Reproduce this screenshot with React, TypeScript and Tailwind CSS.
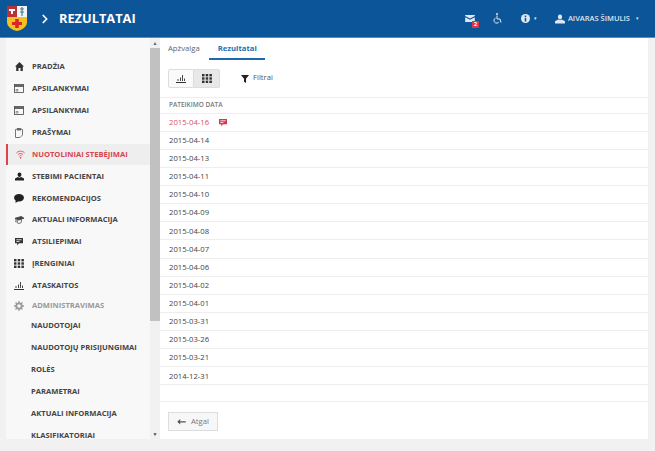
import React from 'react';
import { ChevronRight } from 'lucide-react';

function Crest() {
  return (
    <svg width="20" height="25" viewBox="0 0 20 25" className="shrink-0">
      <path d="M0 0H10V11H0Z" fill="#b5343c" />
      <path d="M10 0H20V11H10Z" fill="#f4f4f4" />
      <path d="M0 11H20V16C20 21 15 24 10 25C5 24 0 21 0 16Z" fill="#f3c21f" />
      <path d="M8.2 13H11.8V16H15V19H11.8V22H8.2V19H5V16H8.2Z" fill="#d9262c" />
      <path d="M2 3H8V5H6V8H4V5H2Z" fill="#fff" />
      <path d="M15 1V10M13 3H17M13 6H17" stroke="#3d7f9d" strokeWidth="1.2" />
    </svg>
  );
}

function Bars({ c = '#333' }: { c?: string }) {
  return (
    <svg width="10" height="9" viewBox="0 0 10 9">
      <path d="M0 8.500H10" stroke={c} strokeWidth="1" />
      <path d="M2 7V5M4.500 7V3.500M6.500 7V1M8.500 7V4.500" stroke={c} strokeWidth="0.9" />
    </svg>
  );
}

function Dots({ c = '#333' }: { c?: string }) {
  return (
    <svg width="10" height="9" viewBox="0 0 10 9" fill={c}>
      {[0, 3.300, 6.600].map((y) => [0, 3.700, 7.400].map((x) => <rect key={`${x}-${y}`} x={x} y={y} width="2.500" height="2.400" />))}
    </svg>
  );
}

function FeedbackIcon({ c = '#333' }: { c?: string }) {
  return (
    <svg width="8" height="8" viewBox="0 0 9 9">
      <path d="M0 0H9V6H4.500L2.500 8.500V6H0Z" fill={c} />
      <path d="M1.500 2H7.500M1.500 4H5" stroke="#fff" strokeWidth="0.9" />
    </svg>
  );
}

const Home = () => (
  <svg width="9" height="9" viewBox="0 0 9 9" fill="#333"><path d="M4.500 0L9 4.500H7.800V9H5.500V6H3.500V9H1.200V4.500H0Z" /></svg>
);
const Cal = () => (
  <svg width="10" height="9" viewBox="0 0 10 9" fill="none" stroke="#444"><rect x="0.500" y="0.500" width="9" height="8" strokeWidth="0.8" /><path d="M0.500 2H9.500" strokeWidth="1.600" /><path d="M2 5.500H4V7H2Z" strokeWidth="0.500" /></svg>
);
const Clip = () => (
  <svg width="8" height="10" viewBox="0 0 8 10" fill="none" stroke="#666" strokeWidth="0.900"><path d="M1.500 1.500H0.500V9.500H5L7.500 7V1.500H6.500" /><path d="M2 0.500H6V2H2Z" fill="#666" /></svg>
);
const Signal = () => (
  <svg width="9" height="9" viewBox="0 0 10 10" fill="none" stroke="#d9444d" strokeWidth="1"><path d="M0.500 3.200C3 0.700 7 0.700 9.500 3.200M2.200 5C3.800 3.600 6.200 3.600 7.800 5M3.800 6.800C4.500 6.200 5.500 6.200 6.200 6.800" /><circle cx="5" cy="8.700" r="0.900" fill="#d9444d" stroke="none" /></svg>
);
const Person = ({ c = '#222', s = 9 }: { c?: string; s?: number }) => (
  <svg width={s} height={s} viewBox="0 0 11 10" fill={c}><path d="M5.500 0C7 0 7.800 1 7.800 2.500C7.800 4 7 5.500 5.500 5.500C4 5.500 3.200 4 3.200 2.500C3.200 1 4 0 5.500 0Z" /><path d="M3.500 5.500L5.500 6.500L7.500 5.500L11 7.500V10H0V7.500Z" /></svg>
);
const Bubble = () => (
  <svg width="10" height="9" viewBox="0 0 11 10" fill="#222"><ellipse cx="5.500" cy="4.200" rx="5.500" ry="4.200" /><path d="M2 6.500L1.500 10L5 7.800Z" /></svg>
);
const Grad = () => (
  <svg width="9" height="9" viewBox="0 0 10 10" fill="none" stroke="#444" strokeWidth="0.900"><path d="M0 2.500L7 0.500L10 2.500L4 4.500Z" fill="#444" /><path d="M2.500 4.500V7.500C4 9 6 8 7 7V3.500M1 3V7" /></svg>
);
const Gear = () => (
  <svg width="10" height="10" viewBox="0 0 10 10" fill="none" stroke="#999"><circle cx="5" cy="5" r="2.700" strokeWidth="1.800" /><path d="M5 0V2M5 8V10M0 5H2M8 5H10M1.500 1.500L2.800 2.800M7.200 7.200L8.500 8.500M1.500 8.500L2.800 7.200M7.200 2.800L8.500 1.500" strokeWidth="1.300" /></svg>
);
const MailIc = () => (
  <svg width="10" height="7" viewBox="0 0 11 8"><path d="M0 0H11V1.200L5.500 4L0 1.200Z" fill="#dfe9f2" /><path d="M0 2.500L5.500 5.300L11 2.500V8H0Z" fill="#dfe9f2" /></svg>
);
const Wheel = () => (
  <svg width="9" height="11" viewBox="0 0 9 11" fill="none" stroke="#dfe9f2" strokeWidth="1"><circle cx="4" cy="1" r="1" fill="#dfe9f2" stroke="none" /><path d="M4 2.500V6H7L8 9.500" /><path d="M2.500 5A2.700 2.700 0 1 0 6 8.800" /></svg>
);
const InfoIc = () => (
  <svg width="9" height="9" viewBox="0 0 9 9"><circle cx="4.500" cy="4.500" r="4.500" fill="#dfe9f2" /><path d="M3.700 1.500H5.300V3H3.700ZM3.700 3.800H5.300V7.500H3.700Z" fill="#0d5599" /></svg>
);
const Funnel = () => (
  <svg width="8" height="8" viewBox="0 0 8 8" fill="#222"><path d="M0 0H8L5 3.800V8L3 6.800V3.800Z" /></svg>
);
const Back = () => (
  <svg width="9" height="6" viewBox="0 0 10 7" fill="#555"><path d="M0 3.200L3.500 0V2.500H10V4H3.500V6.500Z" /></svg>
);

type Item = { label: string; icon?: React.ReactNode; active?: boolean; muted?: boolean; sub?: boolean };

const items: Item[] = [
  { label: 'PRADŽIA', icon: <Home /> },
  { label: 'APSILANKYMAI', icon: <Cal /> },
  { label: 'APSILANKYMAI', icon: <Cal /> },
  { label: 'PRAŠYMAI', icon: <Clip /> },
  { label: 'NUOTOLINIAI STEBĖJIMAI', icon: <Signal />, active: true },
  { label: 'STEBIMI PACIENTAI', icon: <Person /> },
  { label: 'REKOMENDACIJOS', icon: <Bubble /> },
  { label: 'AKTUALI INFORMACIJA', icon: <Grad /> },
  { label: 'ATSILIEPIMAI', icon: <FeedbackIcon /> },
  { label: 'ĮRENGINIAI', icon: <Dots /> },
  { label: 'ATASKAITOS', icon: <Bars /> },
  { label: 'ADMINISTRAVIMAS', icon: <Gear />, muted: true },
  { label: 'NAUDOTOJAI', sub: true },
  { label: 'NAUDOTOJŲ PRISIJUNGIMAI', sub: true },
  { label: 'ROLĖS', sub: true },
  { label: 'PARAMETRAI', sub: true },
  { label: 'AKTUALI INFORMACIJA', sub: true },
  { label: 'KLASIFIKATORIAI', sub: true },
];

const dates = ['2015-04-16', '2015-04-14', '2015-04-13', '2015-04-11', '2015-04-10', '2015-04-09', '2015-04-08', '2015-04-07', '2015-04-06', '2015-04-02', '2015-04-01', '2015-03-31', '2015-03-26', '2015-03-21', '2014-12-31'];

export default function App() {
  return (
    <div className="w-[655px] h-[451px] overflow-hidden bg-[#f1f1f1] flex flex-col font-['Open_Sans',sans-serif] text-[#333]">
      <header className="h-[38px] shrink-0 bg-[#0d5599] border-b border-[#5b8db8] flex items-center text-white">
        <div className="pl-[7px] flex items-center"><Crest /></div>
        <ChevronRight size={14} strokeWidth={3} className="ml-[11px]" />
        <div className="ml-[7px] text-[12.800px] font-bold">REZULTATAI</div>
        <div className="ml-auto flex items-center text-[#dfe9f2]">
          <div className="relative mr-[18px]">
            <MailIc />
            <span className="absolute left-[7px] top-[6px] w-[7px] h-[7px] bg-[#d9364a] text-white text-[6px] font-bold leading-[7px] text-center">2</span>
          </div>
          <span className="mr-[19px] flex"><Wheel /></span>
          <span className="mr-[4px] flex"><InfoIc /></span>
          <span className="text-[5px] mr-[18px]">▾</span>
          <span className="mr-[3px] flex"><Person c="#dfe9f2" s={10} /></span>
          <span className="text-[7.500px] font-semibold">AIVARAS ŠIMULIS</span>
          <span className="text-[5px] ml-[6px] mr-[16px]">▾</span>
        </div>
      </header>
      <div className="flex h-[401px] pl-[6px] pr-[7px]">
        <aside className="w-[144px] bg-[#f8f8f8] overflow-hidden pt-[18px]">
          {items.map((it, i) => (
            <div key={i} className={`flex items-center text-[7.600px] font-bold whitespace-nowrap ${it.active ? 'bg-[#eeeeee] text-[#d9444d] border-l-[2px] border-[#d9444d]' : 'text-[#444]'} ${it.muted ? 'text-[#999] h-[18px]' : 'h-[21.900px]'}`}>
              {it.sub ? (
                <span className="pl-[25px]">{it.label}</span>
              ) : (
                <>
                  <span className={`flex justify-center ${it.active ? 'w-[24px]' : 'w-[26px]'}`}>{it.icon}</span>
                  <span>{it.label}</span>
                </>
              )}
            </div>
          ))}
        </aside>
        <div className="w-[10px] bg-[#f1f1f1] flex flex-col items-center">
          <div className="h-[10px] text-[5px] leading-[10px] text-[#666]">▲</div>
          <div className="h-[273px] w-full bg-[#c1c1c1]"></div>
          <div className="mt-auto h-[10px] text-[5px] leading-[10px] text-[#444]">▼</div>
        </div>
        <main className="flex-1 bg-white flex flex-col">
          <div className="h-[22px] flex items-center pl-[8px] text-[7.700px] relative">
            <span className="text-[#666]">Apžvalga</span>
            <span className="ml-[18px] font-bold text-[#2a6fb0]">Rezultatai</span>
            <span className="absolute left-[49px] bottom-0 w-[56px] h-[2px] bg-[#1f6aae]"></span>
          </div>
          <div className="h-[37px] pl-[8px] pt-[9px] flex items-start">
            <button className="w-[26px] h-[19px] border border-[#ddd] bg-[#fafafa] rounded-l-[2px] flex items-center justify-center"><Bars /></button>
            <button className="w-[26px] h-[19px] border border-l-0 border-[#ddd] bg-[#e8e8e8] rounded-r-[2px] flex items-center justify-center"><Dots /></button>
            <span className="ml-[21px] mt-[6px] flex"><Funnel /></span>
            <span className="ml-[4px] mt-[3px] text-[7.700px] text-[#555]">Filtrai</span>
          </div>
          <div className="h-[16.500px] flex items-center pl-[9px] text-[6.500px] font-semibold text-[#777] border-t border-b border-[#eeeeee]">PATEIKIMO DATA</div>
          {dates.map((d, i) => (
            <div key={d} className={`h-[18.140px] shrink-0 flex items-center pl-[9px] pt-px text-[7.700px] border-b border-[#eeeeee] ${i === 0 ? 'text-[#d9535b]' : 'text-[#444]'}`}>
              {d}
              {i === 0 && <span className="ml-[10px] flex"><FeedbackIcon c="#d9364a" /></span>}
            </div>
          ))}
          <div className="mt-[16px] border-t border-[#eeeeee] pl-[8px] pt-[10px]">
            <button className="w-[50px] h-[19px] border border-[#ddd] bg-[#f7f7f7] flex items-center justify-center gap-[5px] text-[7.700px] text-[#777]">
              <Back />Atgal
            </button>
          </div>
        </main>
      </div>
    </div>
  );
}
